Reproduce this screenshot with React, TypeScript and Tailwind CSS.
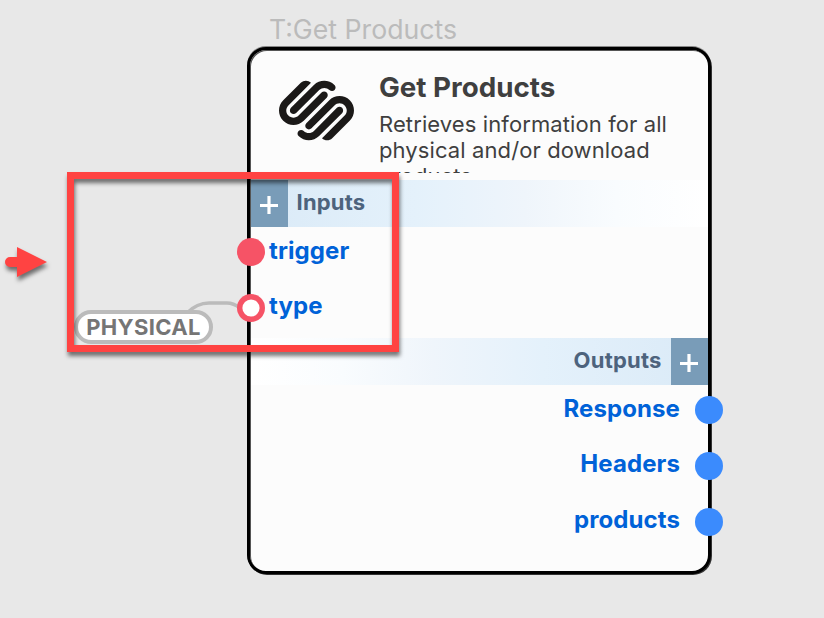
import React from 'react';
import { SiSquarespace } from 'react-icons/si';

function AddButton() {
  return (
    <button className="flex h-[47px] w-[37px] shrink-0 items-start bg-[#799cb8] pt-4 pl-[9px]">
      <svg width="18" height="18" viewBox="0 0 18 18" stroke="#fff" strokeWidth="3.2">
        <path d="M0 9.5H18M9 0V18" />
      </svg>
    </button>
  );
}

function InputPort({ name, open }: { name: string; open?: boolean }) {
  return (
    <div className="flex h-14 items-center">
      <svg className="-ml-3.5 size-7 shrink-0" viewBox="0 0 28 28">
        <circle cx="14" cy="14" r="14" fill="#f65366" />
        {open && <circle cx="14" cy="14" r="8.6" fill="#fff" />}
      </svg>
      <span className={`ml-[4px] text-[24px] leading-7 font-bold tracking-[0.1px] text-[#0062d8] ${open ? '-mt-[4px]' : '-mt-[2px]'}`}>{name}</span>
    </div>
  );
}

function OutputPort({ name, first }: { name: string; first?: boolean }) {
  return (
    <div className="flex h-14 items-center justify-end">
      <span className={`mr-[15px] text-[24px] leading-7 font-bold tracking-[0.1px] text-[#0062d8] ${first ? '-mt-[2px]' : '-mt-[4px]'}`}>{name}</span>
      <span className="-mr-[15px] size-7 shrink-0 rounded-full bg-[#3b8bfd]" />
    </div>
  );
}

export default function App() {
  return (
    <main className="relative h-[618px] w-[824px] overflow-hidden bg-[#e8e8e8] font-['Inter',sans-serif]">
      <svg className="absolute inset-0" width="824" height="618" fill="none">
        <path d="M187 313C194 306 200 303 209 303H227C233 303 236 305 240 308" stroke="#bbb" strokeWidth="3.5" />
      </svg>

      <div className="absolute left-[74px] top-[310px] flex h-[34px] w-[139px] items-center justify-center rounded-full border-4 border-[#bbb] bg-white text-[22px] leading-none font-bold tracking-[0.35px] text-[#757575]">
        PHYSICAL
      </div>

      <section className="absolute left-[247px] top-[13px] w-[464px]">
        <h2 className="h-[34px] pl-[22px] text-[26.7px] leading-[33px] whitespace-nowrap text-[#bbb]">T:Get Products</h2>
        <div className="h-[527px] rounded-[19px] border-3 border-black bg-[#fcfcfc] pl-px shadow-[1px_1px_0_#333,0_-1px_0_#888,inset_1px_1px_0_#555]">
          <header className="flex h-[130px]">
            <SiSquarespace className="mt-[23px] ml-[28px] size-[75px] shrink-0 text-[#1b1918]" />
            <div className="ml-[25px] h-[123px] w-[310px] overflow-hidden pt-[21px] text-[#3f3f3f]">
              <h1 className="text-[27.75px] leading-8 font-bold">Get Products</h1>
              <p className="mt-[8px] text-[22px] leading-[26px] tracking-[0.1px]">Retrieves information for all physical and/or download products.</p>
            </div>
          </header>
          <div className="flex h-[47px] bg-[linear-gradient(to_right,#daeaf7,#e4f1fb_36%,#eff5fb_60%,#f9fcfe_80%,#fff)]">
            <AddButton />
            <span className="mt-[8px] ml-[8.5px] text-[22px] leading-7 font-bold tracking-[0.2px] text-[#4d637d]">Inputs</span>
          </div>
          <div className="-mt-[3px] h-[114px]">
            <InputPort name="trigger" />
            <InputPort name="type" open />
          </div>
          <div className="flex h-[47px] justify-end bg-[linear-gradient(to_left,#daeaf7,#e4f1fb_36%,#eff5fb_60%,#f9fcfe_80%,#fff)]">
            <span className="mt-[8px] mr-[9.5px] text-[22px] leading-7 font-bold tracking-[0.2px] text-[#4d637d]">Outputs</span>
            <AddButton />
          </div>
          <div className="-mt-[3px]">
            <OutputPort name="Response" first />
            <OutputPort name="Headers" />
            <OutputPort name="products" />
          </div>
        </div>
      </section>

      <div className="absolute left-[67px] top-[172px] h-[180px] w-[332px] border-[7px] border-[#ff4342] filter-[drop-shadow(1px_4px_2px_#0008)]" />
      <svg className="absolute left-0 top-[235px] filter-[drop-shadow(1px_4px_2px_#0008)]" width="60" height="55">
        <path d="M10 22H17V12L47 27L17 42V32H10A5 5 0 0 1 10 22Z" fill="#ff4342" />
      </svg>
    </main>
  );
}
